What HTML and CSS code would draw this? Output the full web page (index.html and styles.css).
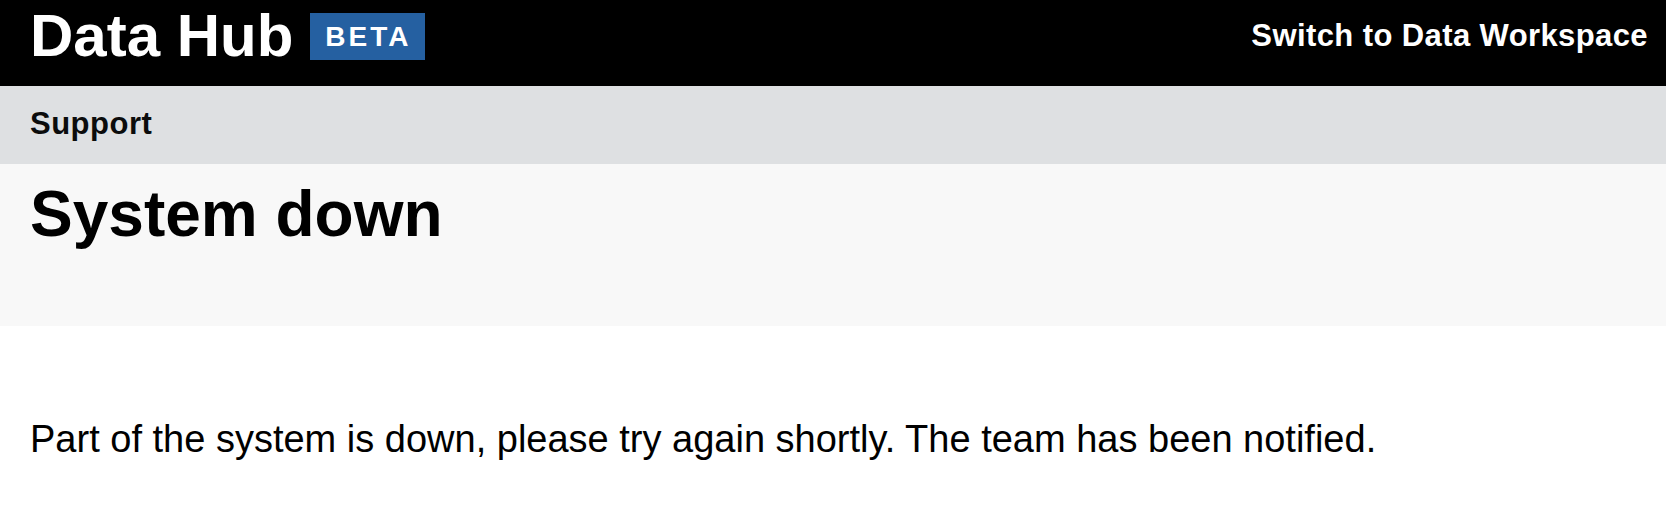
FILE: index.html
```html
<!DOCTYPE html>
<html lang="en">
<head>
<meta charset="utf-8">
<title>System down - Data Hub</title>
<link rel="stylesheet" href="styles.css">
</head>
<body>
<header class="header">
  <div class="brand">
    <span class="brand-name">Data Hub</span>
    <span class="beta-tag">BETA</span>
  </div>
  <a class="switch-link" href="#">Switch to Data Workspace</a>
</header>
<nav class="subnav">
  <span class="subnav-item">Support</span>
</nav>
<section class="page-heading">
  <h1 class="page-title">System down</h1>
</section>
<main class="content">
  <p class="message">Part of the system is down, please try again shortly. The team has been notified.</p>
</main>
</body>
</html>
```
FILE: styles.css
```css
html, body {
  margin: 0;
  padding: 0;
  background: #ffffff;
  font-family: "Liberation Sans", Arial, Helvetica, sans-serif;
  color: #0b0c0c;
}

.header {
  display: flex;
  justify-content: space-between;
  align-items: flex-start;
  height: 86px;
  box-sizing: border-box;
  padding: 0 18px 0 30px;
  background: #000000;
  color: #ffffff;
}

.brand {
  display: flex;
  align-items: flex-start;
  gap: 17px;
}

.brand-name {
  display: block;
  margin-top: 6px;
  font-size: 60px;
  font-weight: 700;
  line-height: 1;
}

.beta-tag {
  display: block;
  margin-top: 13px;
  height: 47px;
  box-sizing: border-box;
  padding: 1px 13px 0 15px;
  line-height: 46px;
  background: #2560a1;
  color: #ffffff;
  font-size: 28px;
  font-weight: 700;
  letter-spacing: 3px;
}

.switch-link {
  display: block;
  margin-top: 20px;
  color: #ffffff;
  text-decoration: none;
  font-size: 31px;
  font-weight: 700;
  line-height: 1;
  letter-spacing: 0.4px;
}

.subnav {
  height: 78px;
  box-sizing: border-box;
  padding: 22px 30px 0;
  background: #dee0e2;
}

.subnav-item {
  display: block;
  font-size: 31px;
  font-weight: 700;
  line-height: 1;
  letter-spacing: 0.5px;
  color: #0b0c0c;
}

.page-heading {
  height: 162px;
  box-sizing: border-box;
  padding: 14px 30px 0;
  background: #f8f8f8;
}

.page-title {
  margin: 0;
  font-size: 64px;
  font-weight: 700;
  line-height: 1.15;
  color: #000000;
}

.content {
  padding: 92px 30px 0;
}

.message {
  margin: 0;
  font-size: 38px;
  line-height: 1.15;
  color: #000000;
}
```
